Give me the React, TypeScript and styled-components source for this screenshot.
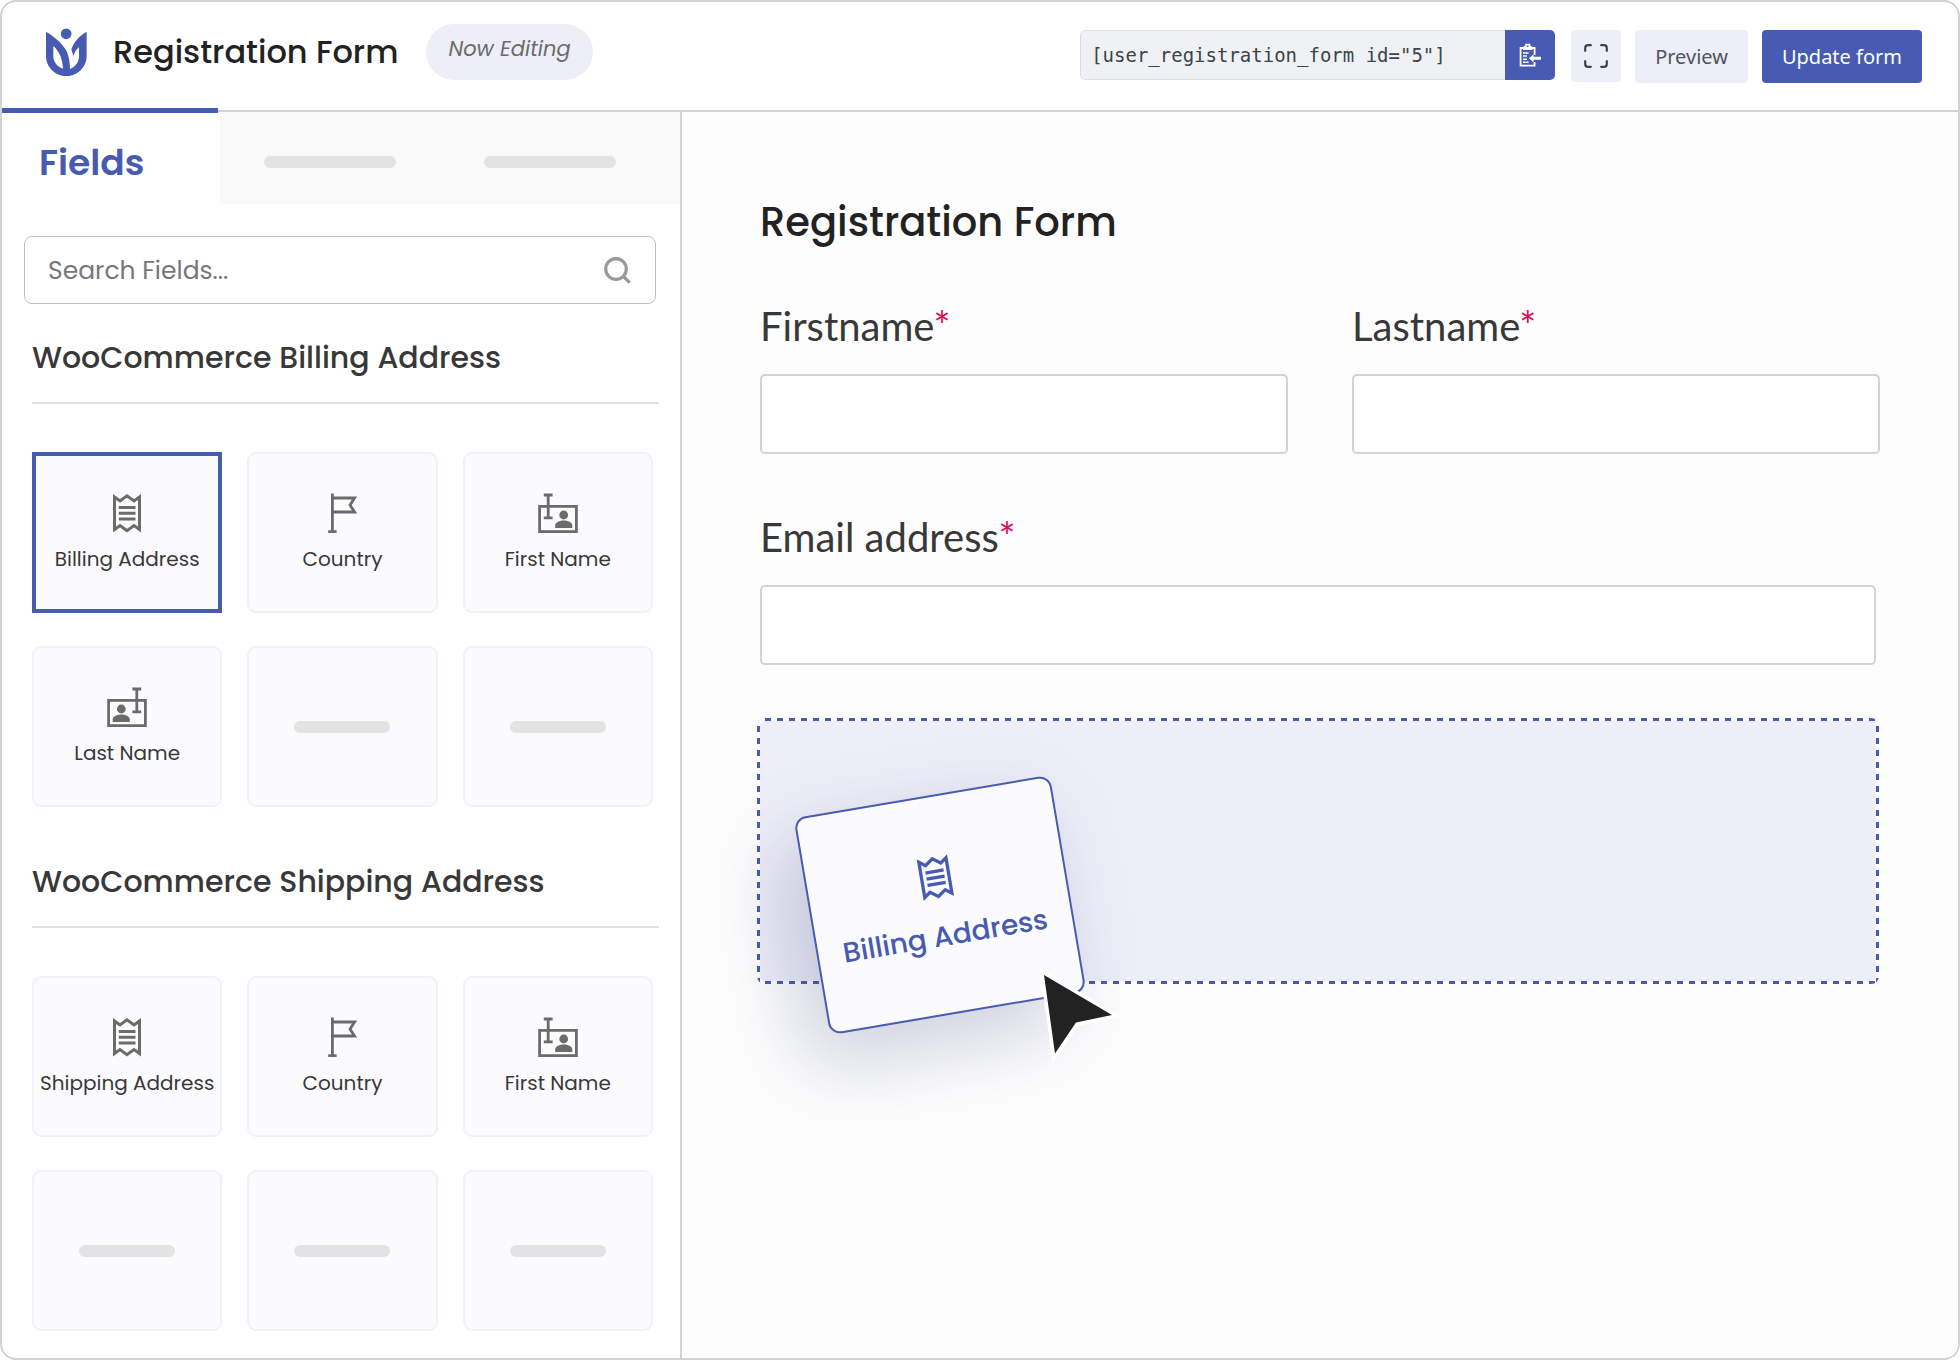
import React from "react";
import styled, { createGlobalStyle, css } from "styled-components";

const color = {
  brand: "#475bb2",
  tint: "#eeeef8",
  card: "#fbfbfe",
  line: "#d3d3d3",
  bar: "#e3e3e3",
  ink: "#222222",
  text: "#383838",
  muted: "#6b6b6b",
  required: "#d6105f",
};

const sans = `Poppins, Inter, "Liberation Sans", sans-serif`;
const ui = `"Noto Sans", "Open Sans", sans-serif`;

const GlobalStyle = createGlobalStyle`
  *, *::before, *::after { box-sizing: border-box; }
  body { margin: 0; background: #ffffff; font-family: ${sans}; color: ${color.text}; }
  button, input { font: inherit; color: inherit; margin: 0; }
  button { border: 0; padding: 0; background: none; cursor: pointer; }
  h1, h2 { margin: 0; }
`;

const Frame = styled.div`
  display: flex;
  flex-direction: column;
  min-height: 100vh;
  border: 2px solid ${color.line};
  border-radius: 16px;
  background: #ffffff;
  overflow: hidden;
`;

const Header = styled.header`
  display: flex;
  justify-content: space-between;
  height: 110px;
  padding: 0 36px 0 44px;
  border-bottom: 2px solid ${color.line};
`;

const Brand = styled.div`
  display: flex;
  align-items: center;
  height: 100px;
`;

const Title = styled.h1`
  margin-left: 26px;
  font-size: 32px;
  line-height: 48px;
  font-weight: 500;
  color: ${color.ink};
`;

const Badge = styled.span`
  margin-left: 28px;
  height: 56px;
  padding: 0 22px;
  border-radius: 28px;
  background: ${color.tint};
  font-size: 21px;
  line-height: 50px;
  font-style: italic;
  color: ${color.muted};
`;

const Toolbar = styled.div`
  display: flex;
  align-items: flex-start;
  padding-top: 28px;
  font-family: ${ui};
`;

const Shortcode = styled.div`
  display: flex;
  width: 475px;
  height: 50px;
  margin-right: 16px;
  border-radius: 5px;
  overflow: hidden;
`;

const ShortcodeInput = styled.input`
  flex: 1;
  min-width: 0;
  padding: 0 10px;
  border: 1px solid #dcdee2;
  border-right: 0;
  border-radius: 5px 0 0 5px;
  outline: 0;
  background: #f0f1f4;
  font-family: "DejaVu Sans Mono", "Liberation Mono", monospace;
  font-size: 19px;
  line-height: 32px;
  color: #3c434a;
`;

const CopyButton = styled.button`
  display: grid;
  place-items: center;
  width: 50px;
  background: ${color.brand};
`;

const ToolButton = styled.button<{ $primary?: boolean; $icon?: boolean }>`
  display: grid;
  place-items: center;
  height: ${(p) => (p.$icon ? 52 : 53)}px;
  padding: ${(p) => (p.$icon ? "0 13px" : "0 20px")};
  border-radius: 4px;
  background: ${(p) => (p.$primary ? color.brand : color.tint)};
  color: ${(p) => (p.$primary ? "#ffffff" : "#50545c")};
  font-size: 20px;

  & + & {
    margin-left: 14px;
  }
`;

const Body = styled.div`
  display: flex;
  flex: 1;
`;

const Sidebar = styled.aside`
  flex: 0 0 680px;
  border-right: 2px solid ${color.line};
`;

const Tabs = styled.div`
  display: flex;
  height: 92px;
`;

const ActiveTab = styled.button`
  position: relative;
  width: 218px;
  padding: 10px 0 0 37px;
  text-align: left;
  font-size: 36px;
  line-height: 48px;
  font-weight: 600;
  color: ${color.brand};

  &::before {
    content: "";
    position: absolute;
    top: -4px;
    left: 0;
    width: 216px;
    height: 5px;
    background: ${color.brand};
  }
`;

const IdleTabs = styled.div`
  display: flex;
  flex: 1;
  align-items: center;
  gap: 88px;
  padding: 8px 44px 0 44px;
  background: #fafafa;
`;

const IdleTab = styled.button`
  display: flex;
  width: 132px;
  height: 60px;
  align-items: center;
`;

const Bar = styled.span<{ $w: number }>`
  display: block;
  width: ${(p) => p.$w}px;
  height: 12px;
  border-radius: 6px;
  background: ${color.bar};
`;

const SearchBox = styled.label`
  display: flex;
  align-items: center;
  height: 68px;
  margin: 32px 24px 0 22px;
  padding: 0 24px 0 23px;
  border: 1px solid #bfbfbf;
  border-radius: 8px;
`;

const SearchInput = styled.input`
  flex: 1;
  min-width: 0;
  padding: 2px 0 0;
  border: 0;
  outline: 0;
  background: transparent;
  font-size: 25px;

  &::placeholder {
    color: #777777;
    opacity: 1;
  }
`;

const Section = styled.section`
  padding: 34px 21px 21px 30px;
`;

const SectionTitle = styled.h2`
  padding-bottom: 24px;
  border-bottom: 2px solid #e0e0e0;
  font-size: 30px;
  line-height: 40px;
  font-weight: 500;
  color: ${color.text};
`;

const CardGrid = styled.div`
  display: grid;
  grid-template-columns: repeat(3, 1fr);
  grid-auto-rows: 161px;
  gap: 33px 25px;
  margin: 48px 6px 0 0;
`;

const cardBox = css`
  display: flex;
  flex-direction: column;
  align-items: center;
  justify-content: center;
  gap: 12px;
  border: 2px solid #f1f1f9;
  border-radius: 9px;
  background: ${color.card};
`;

const FieldCard = styled.button<{ $selected?: boolean }>`
  ${cardBox}
  color: ${color.muted};
  ${(p) =>
    p.$selected &&
    css`
      border: 4px solid ${color.brand};
      border-radius: 0;
    `}
`;

const EmptyCard = styled.div`
  ${cardBox}
`;

const CardLabel = styled.span`
  font-size: 20px;
  line-height: 28px;
  white-space: nowrap;
  color: ${color.text};
`;

const Canvas = styled.main`
  flex: 1;
  min-width: 0;
  padding: 80px 78px;
  background: #fdfdfd;
`;

const FormTitle = styled.h2`
  font-size: 40px;
  line-height: 60px;
  font-weight: 500;
  color: ${color.ink};
`;

const FieldRow = styled.div<{ $columns: number }>`
  display: grid;
  grid-template-columns: repeat(${(p) => p.$columns}, 1fr);
  gap: 64px;
  margin-top: 50px;

  & + & {
    margin-top: 59px;
    padding-right: 4px;
  }
`;

const Field = styled.label`
  display: flex;
  flex-direction: column;
  gap: 24px;
  font-family: Lato, "Noto Sans", sans-serif;
  font-size: 40px;
  line-height: 48px;
`;

const Required = styled.span`
  color: ${color.required};
`;

const TextBox = styled.input`
  width: 100%;
  height: 80px;
  padding: 0 20px;
  border: 2px solid ${color.line};
  border-radius: 5px;
  background: #ffffff;
  font-size: 28px;
`;

const dashesX = `linear-gradient(90deg, ${color.brand} 50%, transparent 0)`;
const dashesY = `linear-gradient(180deg, ${color.brand} 50%, transparent 0)`;

const DropZone = styled.div`
  position: relative;
  height: 266px;
  margin: 53px 1px 0 -3px;
  border: 3px solid transparent;
  border-radius: 8px;
  background:
    ${dashesX} 8px 0 / 12px 3px repeat-x border-box,
    ${dashesX} 8px 100% / 12px 3px repeat-x border-box,
    ${dashesY} 0 8px / 3px 12px repeat-y border-box,
    ${dashesY} 100% 8px / 3px 12px repeat-y border-box,
    linear-gradient(${color.tint}, ${color.tint}) padding-box;
`;

const DraggedCard = styled.div`
  position: absolute;
  left: 50px;
  top: 74px;
  display: flex;
  flex-direction: column;
  align-items: center;
  justify-content: center;
  gap: 20px;
  width: 260px;
  height: 220px;
  border: 2px solid ${color.brand};
  border-radius: 12px;
  background: ${color.card};
  box-shadow: -24px 28px 80px rgba(35, 48, 110, 0.22);
  color: ${color.brand};
  transform: rotate(-9.6deg);
`;

const DraggedLabel = styled.span`
  font-size: 28px;
  line-height: 36px;
  font-weight: 500;
  white-space: nowrap;
`;

const Pointer = styled.svg`
  position: absolute;
  left: 284px;
  top: 254px;
  overflow: visible;
`;

function Logo() {
  return (
    <svg width="41" height="48" viewBox="46 22 123 144" aria-hidden="true">
      <circle cx="106.5" cy="39.5" r="16" fill={color.brand} />
      <path
        fill={color.brand}
        fillRule="evenodd"
        d="M46 33C76 50 100 74 109 94C115 110 118 128 118 145C135 138 145 124 145 106V80C137 86 132 94 128 106L122 86C130 62 148 44 168 33V105C168 140 140 166 107 166C74 166 46 140 46 105ZM68 76V106C68 122 78 138 97 144C96 116 86 92 68 76Z"
      />
    </svg>
  );
}

function ReceiptIcon({ size = 40 }: { size?: number }) {
  return (
    <svg width={size} height={size} viewBox="0 0 40 40" fill="none" stroke="currentColor" strokeWidth="3" aria-hidden="true">
      <path d="M7.5 4L13 8L20 2.8L27 8L32.5 4V36.5L27 32.5L20 37.6L13 32.5L7.5 36.5Z" />
      <path d="M11.8 14.6H28.5M11.8 20.3H28.5M11.8 26H28.5" />
    </svg>
  );
}

function FlagIcon() {
  return (
    <svg width="40" height="40" viewBox="0 0 40 40" fill="none" stroke="currentColor" strokeWidth="2.8" aria-hidden="true">
      <path d="M10.4 0.4V38.6M6.2 38.6H14.6M10.4 5H32.6L28 12L32.6 19H10.4" />
    </svg>
  );
}

function NameIcon({ mirrored = false }: { mirrored?: boolean }) {
  return (
    <svg width="40" height="40" viewBox="0 0 40 40" aria-hidden="true">
      <g transform={mirrored ? "translate(40 0) scale(-1 1)" : undefined}>
        <path
          fill="none"
          stroke="currentColor"
          strokeWidth="2.8"
          d="M1.6 13.4H38.4V38.6H1.6ZM10.2 2V24.8M5.8 2H14.6M5.8 24.8H14.6"
        />
        <circle cx="25.7" cy="22" r="4.4" fill="currentColor" />
        <path fill="currentColor" d="M17.2 35V32.4C17.2 29.4 22 27.6 25.7 27.6S34.3 29.4 34.3 32.4V35Z" />
      </g>
    </svg>
  );
}

function SearchIcon() {
  return (
    <svg width="27" height="27" viewBox="0 0 27 27" fill="none" stroke="#999999" strokeWidth="3.2" aria-hidden="true">
      <circle cx="12" cy="12" r="10.3" />
      <path d="M19 19L25.6 25.6" />
    </svg>
  );
}

function PasteIcon() {
  return (
    <svg width="23" height="24" viewBox="0 0 23 24" fill="none" stroke="#ffffff" strokeWidth="1.8" aria-hidden="true">
      <path d="M15.6 12V5H1.6V22.6H15.6V19" />
      <path d="M5 6.2V4.4L7 3.4V1.6H10.4V3.4L12.4 4.4V6.2Z" />
      <path d="M4 10H9.6M4 13H8M4 16.2H8M4 19.2H9.6" strokeWidth="1.4" />
      <path d="M14.6 11.2L10 15.3L14.6 19.4V16.8H22V13.8H14.6Z" fill="#ffffff" stroke="none" />
    </svg>
  );
}

function ExpandIcon() {
  return (
    <svg width="24" height="24" viewBox="0 0 24 24" fill="none" stroke="#3c434a" strokeWidth="2.2" strokeLinecap="round" aria-hidden="true">
      <path d="M1.2 6.8V4Q1.2 1.2 4 1.2H6.8M17.2 1.2H20Q22.8 1.2 22.8 4V6.8M22.8 17.2V20Q22.8 22.8 20 22.8H17.2M6.8 22.8H4Q1.2 22.8 1.2 20V17.2" />
    </svg>
  );
}

type Item = { label: string; icon: React.ReactNode; selected?: boolean } | null;

const groups: { title: string; items: Item[] }[] = [
  {
    title: "WooCommerce Billing Address",
    items: [
      { label: "Billing Address", icon: <ReceiptIcon />, selected: true },
      { label: "Country", icon: <FlagIcon /> },
      { label: "First Name", icon: <NameIcon /> },
      { label: "Last Name", icon: <NameIcon mirrored /> },
      null,
      null,
    ],
  },
  {
    title: "WooCommerce Shipping Address",
    items: [
      { label: "Shipping Address", icon: <ReceiptIcon /> },
      { label: "Country", icon: <FlagIcon /> },
      { label: "First Name", icon: <NameIcon /> },
      null,
      null,
      null,
    ],
  },
];

const formRows = [["Firstname", "Lastname"], ["Email address"]];

export default function App() {
  return (
    <Frame>
      <GlobalStyle />
      <Header>
        <Brand>
          <Logo />
          <Title>Registration Form</Title>
          <Badge>Now Editing</Badge>
        </Brand>
        <Toolbar>
          <Shortcode>
            <ShortcodeInput readOnly aria-label="Shortcode" value={'[user_registration_form id="5"]'} />
            <CopyButton type="button" aria-label="Copy shortcode">
              <PasteIcon />
            </CopyButton>
          </Shortcode>
          <ToolButton type="button" $icon aria-label="Full screen">
            <ExpandIcon />
          </ToolButton>
          <ToolButton type="button">Preview</ToolButton>
          <ToolButton type="button" $primary>
            Update form
          </ToolButton>
        </Toolbar>
      </Header>
      <Body>
        <Sidebar>
          <Tabs>
            <ActiveTab type="button">Fields</ActiveTab>
            <IdleTabs>
              <IdleTab type="button" aria-label="Second tab">
                <Bar $w={132} />
              </IdleTab>
              <IdleTab type="button" aria-label="Third tab">
                <Bar $w={132} />
              </IdleTab>
            </IdleTabs>
          </Tabs>
          <SearchBox>
            <SearchInput type="text" placeholder="Search Fields..." aria-label="Search fields" />
            <SearchIcon />
          </SearchBox>
          {groups.map((group) => (
            <Section key={group.title}>
              <SectionTitle>{group.title}</SectionTitle>
              <CardGrid>
                {group.items.map((item, i) =>
                  item ? (
                    <FieldCard key={i} type="button" $selected={item.selected}>
                      {item.icon}
                      <CardLabel>{item.label}</CardLabel>
                    </FieldCard>
                  ) : (
                    <EmptyCard key={i}>
                      <Bar $w={96} />
                    </EmptyCard>
                  )
                )}
              </CardGrid>
            </Section>
          ))}
        </Sidebar>
        <Canvas>
          <FormTitle>Registration Form</FormTitle>
          {formRows.map((row) => (
            <FieldRow key={row[0]} $columns={row.length}>
              {row.map((name) => (
                <Field key={name}>
                  <span>
                    {name}
                    <Required>*</Required>
                  </span>
                  <TextBox type="text" />
                </Field>
              ))}
            </FieldRow>
          ))}
          <DropZone>
            <DraggedCard>
              <ReceiptIcon size={44} />
              <DraggedLabel>Billing Address</DraggedLabel>
            </DraggedCard>
            <Pointer width="68" height="79" viewBox="0 0 68 79" aria-hidden="true">
              <path d="M0 0L68 40L32 47.5L11 78.5Z" fill="#ffffff" stroke="#ffffff" strokeWidth="7" strokeMiterlimit="10" />
              <path d="M0 0L68 40L32 47.5L11 78.5Z" fill={color.ink} />
            </Pointer>
          </DropZone>
        </Canvas>
      </Body>
    </Frame>
  );
}
